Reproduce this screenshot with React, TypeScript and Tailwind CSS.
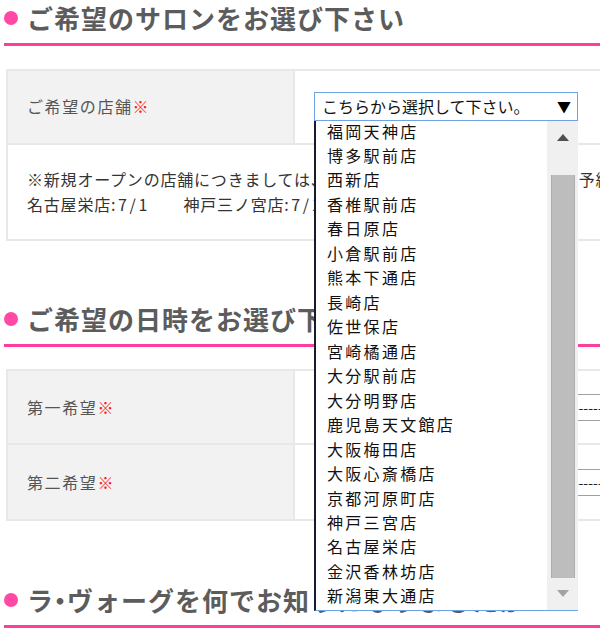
import React from "react";

const stores = [
  "福岡天神店",
  "博多駅前店",
  "西新店",
  "香椎駅前店",
  "春日原店",
  "小倉駅前店",
  "熊本下通店",
  "長崎店",
  "佐世保店",
  "宮崎橘通店",
  "大分駅前店",
  "大分明野店",
  "鹿児島天文館店",
  "大阪梅田店",
  "大阪心斎橋店",
  "京都河原町店",
  "神戸三宮店",
  "名古屋栄店",
  "金沢香林坊店",
  "新潟東大通店",
];

function Heading({
  children,
  className,
}: {
  children: React.ReactNode;
  className: string;
}) {
  return (
    <div
      className={
        "flex items-center h-[46px] pb-[7px] border-b-[3px] border-[#ff3d9e] " +
        className
      }
    >
      <span className="w-[14px] h-[14px] rounded-full bg-[#ff4aa5] mr-[9px] shrink-0" />
      <span className="text-[26px] font-bold tracking-[1px] text-[#5c5c5c] leading-none whitespace-nowrap">
        {children}
      </span>
    </div>
  );
}

function Label({ text }: { text: string }) {
  return (
    <span className="text-[16px] tracking-[1.6px] text-[#555555] whitespace-nowrap">
      {text}
      <span className="text-[#ff1a1a]">※</span>
    </span>
  );
}

function DateRow({ label, last }: { label: string; last?: boolean }) {
  return (
    <div
      className={
        "flex h-[74px] " + (last ? "" : "border-b-2 border-[#e8e8e8]")
      }
    >
      <div className="w-[287px] shrink-0 bg-[#f2f2f2] border-r-2 border-[#e8e8e8] flex items-center pl-[19px]">
        <Label text={label} />
      </div>
      <div className="flex-1 flex items-center pl-[19px]">
        <div className="w-[500px] h-[27px] border border-[#a0a0a0] flex items-center pl-[6px] text-[14px] text-[#222] whitespace-nowrap overflow-hidden">
          ----------------------------------------------------------------------------
        </div>
      </div>
    </div>
  );
}

export default function App() {
  return (
    <div
      className="w-[600px] h-[644px] overflow-hidden bg-white"
      style={{ fontFamily: '"Noto Sans CJK JP", "Noto Sans", sans-serif' }}
    >
      <div className="w-[720px] pl-[4px]">
        <Heading className="">ご希望のサロンをお選び下さい</Heading>

        <div className="ml-[2px] mt-[23px] border-2 border-[#e8e8e8]">
          <div className="flex h-[74px] border-b-2 border-[#e8e8e8]">
            <div className="w-[287px] shrink-0 bg-[#f2f2f2] border-r-2 border-[#e8e8e8] flex items-center pl-[19px] pb-[3px]">
              <Label text="ご希望の店舗" />
            </div>
            <div className="flex-1 flex items-center pl-[19px] pb-[2px]">
              <div className="relative z-10">
                <div className="w-[264px] h-[29px] border border-[#6fa3e6] bg-white flex items-center justify-between pl-[7px] pr-[6px] text-[16px] text-[#111] leading-none">
                  <span className="whitespace-nowrap">こちらから選択して下さい。</span>
                  <span className="text-[14px] text-black">▼</span>
                </div>
                <div className="absolute left-0 top-full w-[264px] h-[490px] bg-white border-l-[2px] border-l-[#1a1a2a] border-b border-b-[#6fa3e6] overflow-hidden">
                  <div className="mt-[-2px] pl-[11px] pr-[31px]">
                    {stores.map((s) => (
                      <div
                        key={s}
                        className="h-[24.47px] leading-[24.47px] text-[16px] tracking-[2.3px] text-[#111] whitespace-nowrap"
                      >
                        {s}
                      </div>
                    ))}
                  </div>
                  <div className="absolute right-0 top-0 bottom-0 w-[31px] bg-[#f0f0f0] flex flex-col items-center">
                    <div className="h-[54px] w-full flex items-start justify-center pt-[13px]">
                      <svg width="12" height="7" viewBox="0 0 12 7">
                        <polygon points="6,0 12,7 0,7" fill="#505050" />
                      </svg>
                    </div>
                    <div className="w-[24px] flex-1 bg-[#bdbdbd] border-x border-[#adadad]" />
                    <div className="h-[32px] w-full flex items-start justify-center pt-[12px]">
                      <svg width="12" height="7" viewBox="0 0 12 7">
                        <polygon points="0,0 12,0 6,7" fill="#a3a3a3" />
                      </svg>
                    </div>
                  </div>
                </div>
              </div>
            </div>
          </div>
          <div className="h-[94px] flex flex-col justify-center pl-[19px] text-[16px] tracking-[0.8px] leading-[25px] text-[#333] whitespace-nowrap">
            <div>※新規オープンの店舗につきましては、下記オープン日以降の日程にてご予約をお願い致します。</div>
            <div>
              名古屋栄店<span className="tracking-[2.6px]">:7/1</span>　　神戸三ノ宮店<span className="tracking-[2.6px]">:7/15</span>
            </div>
          </div>
        </div>

        <Heading className="mt-[60px]">ご希望の日時をお選び下さい</Heading>

        <div className="ml-[2px] mt-[22px] border-2 border-[#e8e8e8]">
          <DateRow label="第一希望" />
          <DateRow label="第二希望" last />
        </div>

        <Heading className="mt-[61px]">
          ラ<span className="mx-[-7px]">・</span>ヴォーグを何でお知りになりましたか
        </Heading>
      </div>
    </div>
  );
}
